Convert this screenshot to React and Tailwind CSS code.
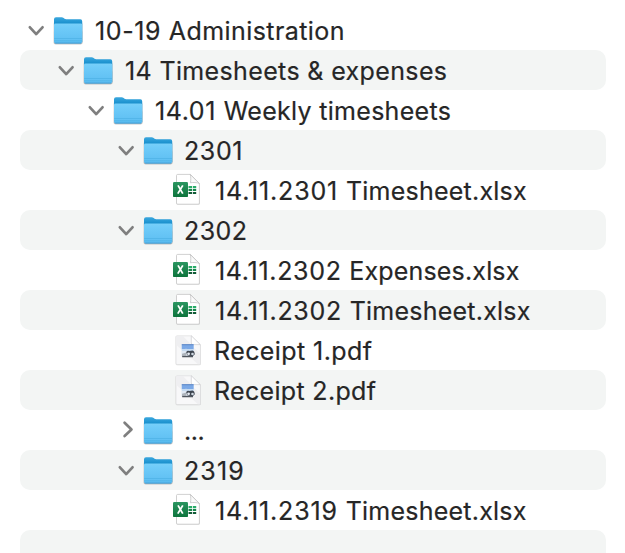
import React from 'react';

const rows = [
  { kind: 'folder', state: 'open', code: '10-19 ', codeText: 'pl-px tracking-[0.6px]', name: 'Administration', indent: 'pl-2', text: 'tracking-[0.43px]' },
  { kind: 'folder', state: 'open', code: '14 ', codeText: 'pl-px tracking-[0.36px]', name: 'Timesheets & expenses', indent: 'pl-[38px]', text: 'tracking-[0.36px]' },
  { kind: 'folder', state: 'open', code: '14.01 ', codeText: 'pl-px tracking-[0.6px]', name: 'Weekly timesheets', indent: 'pl-[68px]', text: 'tracking-[0.3px]' },
  { kind: 'folder', state: 'open', name: '2301', indent: 'pl-[98px]', text: 'tracking-[0.6px]' },
  { kind: 'sheet', code: '14.11.2301 ', codeText: 'pl-px tracking-[0.84px]', name: 'Timesheet.xlsx', indent: 'pl-32', text: 'tracking-[0.23px]' },
  { kind: 'folder', state: 'open', name: '2302', indent: 'pl-[98px]', text: 'tracking-[0.45px]' },
  { kind: 'sheet', code: '14.11.2302 ', codeText: 'pl-px tracking-[0.68px]', name: 'Expenses.xlsx', indent: 'pl-32', text: 'tracking-[0.17px]' },
  { kind: 'sheet', code: '14.11.2302 ', codeText: 'pl-px tracking-[0.72px]', name: 'Timesheet.xlsx', indent: 'pl-32', text: 'tracking-[0.23px]' },
  { kind: 'pdf', name: 'Receipt 1.pdf', indent: 'pl-32', text: 'tracking-[0.42px]' },
  { kind: 'pdf', name: 'Receipt 2.pdf', indent: 'pl-32', text: 'tracking-[0.33px]' },
  { kind: 'folder', state: 'closed', name: '...', indent: 'pl-[98px]', text: 'tracking-[-0.4px]' },
  { kind: 'folder', state: 'open', name: '2319', indent: 'pl-[98px]', text: 'tracking-[1.1px]' },
  { kind: 'sheet', code: '14.11.2319 ', codeText: 'pl-px tracking-[0.84px]', name: 'Timesheet.xlsx', indent: 'pl-32', text: 'tracking-[0.23px]' },
];

function Chevron({ state }) {
  return (
    <svg className="h-10 w-[25px] shrink-0" viewBox="0 0 25 40" fill="none" stroke="#7f7f7f" strokeWidth="2.7" strokeLinecap="round" strokeLinejoin="round">
      {state === 'open' && <path d="M1.9 17.3 8.2 24.1 14.5 17.3" />}
      {state === 'closed' && <path d="M6.6 12.8 13.5 19.4 6.6 26" />}
    </svg>
  );
}

function Folder() {
  return (
    <svg className="h-10 w-[41px] shrink-0" viewBox="0 0 41 40">
      <defs>
        <linearGradient id="folderFront" x1="0" y1="0" x2="0" y2="1">
          <stop offset="0" stopColor="#78d0fa" />
          <stop offset="0.2" stopColor="#6fcbf9" />
          <stop offset="1" stopColor="#5cbdf1" />
        </linearGradient>
        <linearGradient id="folderBack" gradientUnits="userSpaceOnUse" x1="0" y1="7" x2="0" y2="14.5">
          <stop offset="0" stopColor="#3ba7de" />
          <stop offset="0.5" stopColor="#289bd6" />
          <stop offset="1" stopColor="#148ac8" />
        </linearGradient>
      </defs>
      <rect x="0.4" y="12" width="29.4" height="22.6" rx="2" fill="#000" opacity="0.12" />
      <rect x="0.9" y="20" width="28.4" height="14.2" rx="1.8" fill="#000" opacity="0.2" />
      <path d="M1 9.2Q1 7.2 3 7.2H8.6Q9.8 7.2 10.7 8L11.6 8.8Q12.2 9.2 13.2 9.2H27.3Q29.2 9.2 29.2 11.3V32H1Z" fill="url(#folderBack)" />
      <path d="M1 14.6Q1 13.4 2.4 13.4H27.8Q29.2 13.4 29.2 14.6V31.8Q29.2 33.4 27.5 33.4H2.7Q1 33.4 1 31.8Z" fill="url(#folderFront)" />
      <path d="M1.2 28.5H29M1.2 30.8H29" stroke="#4aaee3" strokeWidth="0.6" />
      <path d="M2.2 33H28" stroke="#3c9bd3" strokeWidth="0.8" />
    </svg>
  );
}

function Sheet() {
  return (
    <svg className="h-10 w-[41px] shrink-0" viewBox="0 0 41 40">
      <defs>
        <linearGradient id="excelTile" x1="0" y1="0" x2="0" y2="1">
          <stop offset="0" stopColor="#2a9560" />
          <stop offset="1" stopColor="#0d743c" />
        </linearGradient>
      </defs>
      <path d="M4.6 4.8H17.5L27 14.2V33.6Q27 34.8 25.8 34.8H4.6Q3.4 34.8 3.4 33.6V6Q3.4 4.8 4.6 4.8Z" fill="#000" opacity="0.12" />
      <path d="M4.7 4.4H17.4L26.4 13.4V33Q26.4 34.2 25.2 34.2H4.7Q3.5 34.2 3.5 33V5.6Q3.5 4.4 4.7 4.4Z" fill="#fff" stroke="#c6c6c6" strokeWidth="0.8" />
      <path d="M17.3 4.5C17.9 7 18 10 17.4 12.8 20 12.3 24 12.4 26.3 13.5Z" fill="#fafafa" stroke="#bbb" strokeWidth="0.7" />
      <path d="M15.5 15.9h3.5v2.3h-3.5zM19.8 15.9h3.4v2.3h-3.4z" fill="#2aab69" />
      <path d="M15.5 19h3.5v2.1h-3.5zM19.8 19h3.4v2.1h-3.4z" fill="#17824b" />
      <path d="M15.5 21.9h3.5V24h-3.5zM19.8 21.9h3.4V24h-3.4z" fill="#115b37" />
      <rect x="0" y="12.1" width="15" height="15" rx="1.2" fill="url(#excelTile)" />
      <path d="M5 15.4 9.8 23.6M9.8 15.4 4.8 23.6" stroke="#fff" strokeWidth="1.8" />
    </svg>
  );
}

function Pdf() {
  return (
    <svg className="h-10 w-[41px] shrink-0" viewBox="0 0 41 40">
      <path d="M3.3 6H18L28 15V34Q28 35.3 26.7 35.3H4Q2.7 35.3 2.7 34V6.5Z" fill="#000" opacity="0.11" />
      <path d="M4 5.8H18.3L27.4 14.8V33.4Q27.4 34.6 26.2 34.6H4.2Q3 34.6 3 33.4V6.8Q3 5.8 4 5.8Z" fill="#f8f8f9" stroke="#d6d6d8" strokeWidth="0.6" />
      <path d="M3.3 6.1H10L27 24V34.2H25L3.3 15Z" fill="#efeff1" />
      <path d="M18.3 5.8V13Q18.3 14.6 19.9 14.6H27.2Z" fill="#fff" stroke="#c6c6c9" strokeWidth="0.6" />
      <rect x="8.4" y="14.2" width="12.6" height="12.2" fill="#e0e9f4" />
      <rect x="8.8" y="14.4" width="11.8" height="4.8" fill="#7ba8e6" />
      <path d="M8.8 14.7H20.6" stroke="#4f79bd" strokeWidth="0.8" />
      <path d="M9 19.6 13 18.8 17 19.4 20.6 19V21H9Z" fill="#c6dbf1" />
      <path d="M9 23.8 13.5 22.6V26.5H9Z" fill="#aeb4bb" />
      <path d="M9.2 26.6H20" stroke="#50565e" strokeWidth="1.3" />
      <path d="M13.2 22.2Q14 20.4 16.2 21L19.5 20.6Q21.8 21.2 21.7 24.6L19.6 26.2 14.5 25.6Z" fill="#3f4650" />
      <circle cx="15.6" cy="23.8" r="1.4" fill="#e6ebf2" />
      <circle cx="19.5" cy="24" r="1.3" fill="#cfd8e3" />
    </svg>
  );
}

const icons = { folder: Folder, sheet: Sheet, pdf: Pdf };

export default function App() {
  return (
    <main className="h-[553px] w-[625px] overflow-hidden bg-white pl-5 pt-2.5 font-['Inter',sans-serif] text-[#262626]">
      <ul className="flex w-[586px] flex-col">
        {rows.map((row, index) => {
          const Icon = icons[row.kind];
          return (
            <li key={index} className={`flex h-10 items-center rounded-[10px] even:bg-[#f3f5f4] ${row.indent}`}>
              <Chevron state={row.state} />
              <Icon />
              <span className="whitespace-pre pt-0.5 text-[25px] leading-10 [-webkit-text-stroke:0.2px_#262626]">
                {row.code && <span className={row.codeText}>{row.code}</span>}
                <span className={row.text}>{row.name}</span>
              </span>
            </li>
          );
        })}
        <li className="h-10 rounded-[10px] bg-[#f3f5f4]" />
      </ul>
    </main>
  );
}
